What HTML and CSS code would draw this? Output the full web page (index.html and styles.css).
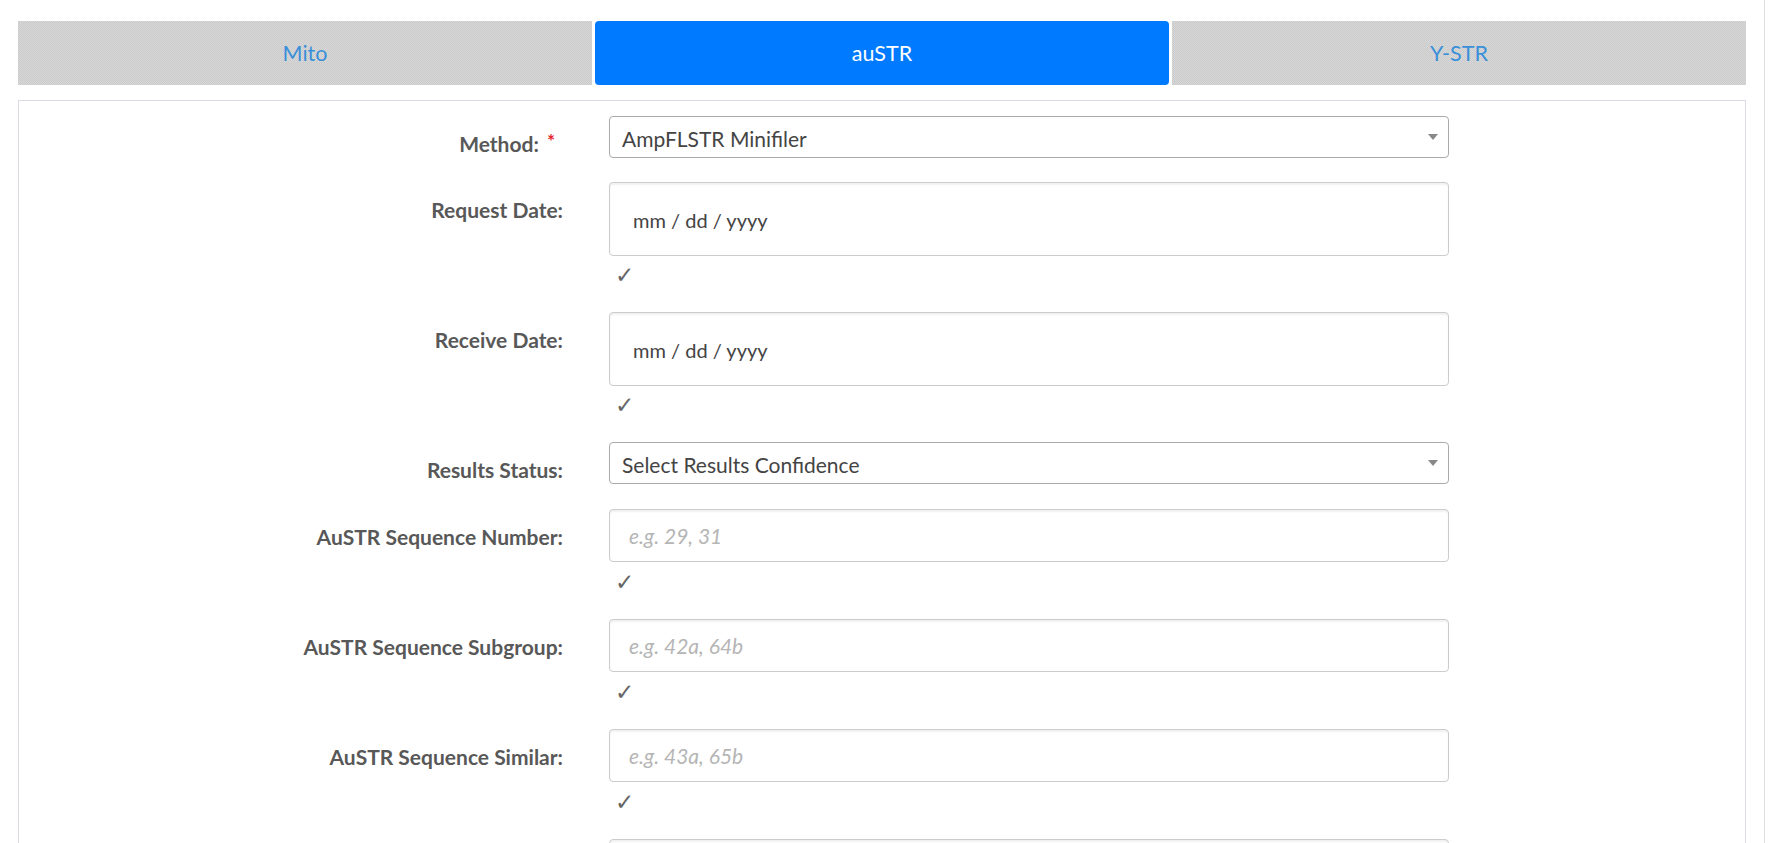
FILE: index.html
```html
<!DOCTYPE html>
<html lang="en">
<head>
<meta charset="utf-8">
<title>auSTR</title>
<link rel="stylesheet" href="styles.css">
</head>
<body>
<div class="page">
  <nav class="tabs">
    <div class="tab">Mito</div>
    <div class="tab active">auSTR</div>
    <div class="tab">Y-STR</div>
  </nav>
  <section class="panel">
    <form class="form">
      <div class="row row-first">
        <label class="label label-req">Method: <span class="req">*</span></label>
        <div class="field">
          <div class="select"><span class="select-text">AmpFLSTR Minifiler</span><b class="arrow"></b></div>
        </div>
      </div>
      <div class="row">
        <label class="label">Request Date:</label>
        <div class="field">
          <input class="date" type="text" value="mm / dd / yyyy" readonly>
          <div class="check check-date">✓</div>
        </div>
      </div>
      <div class="row">
        <label class="label">Receive Date:</label>
        <div class="field">
          <input class="date" type="text" value="mm / dd / yyyy" readonly>
          <div class="check check-date">✓</div>
        </div>
      </div>
      <div class="row">
        <label class="label">Results Status:</label>
        <div class="field">
          <div class="select"><span class="select-text">Select Results Confidence</span><b class="arrow"></b></div>
        </div>
      </div>
      <div class="row">
        <label class="label">AuSTR Sequence Number:</label>
        <div class="field">
          <input class="text" type="text" placeholder="e.g. 29, 31">
          <div class="check">✓</div>
        </div>
      </div>
      <div class="row">
        <label class="label">AuSTR Sequence Subgroup:</label>
        <div class="field">
          <input class="text" type="text" placeholder="e.g. 42a, 64b">
          <div class="check">✓</div>
        </div>
      </div>
      <div class="row">
        <label class="label">AuSTR Sequence Similar:</label>
        <div class="field">
          <input class="text" type="text" placeholder="e.g. 43a, 65b">
          <div class="check">✓</div>
        </div>
      </div>
      <div class="row">
        <label class="label"></label>
        <div class="field">
          <input class="text" type="text">
        </div>
      </div>
    </form>
  </section>
</div>
</body>
</html>
```

FILE: styles.css
```css
* { box-sizing: border-box; }
html, body { margin: 0; padding: 0; background: #fff; overflow: hidden; }
body { font-family: Lato, "Open Sans", sans-serif; }

.page {
  width: 1765px;
  min-height: 100vh;
  border-right: 1px solid #dedede;
  padding: 21px 18px 0 18px;
}

.tabs {
  display: grid;
  grid-template-columns: repeat(3, 1fr);
  gap: 3px;
  height: 64px;
}
.tab {
  display: flex;
  align-items: center;
  justify-content: center;
  font-size: 21.5px;
  color: #3a8fd9;
  background: repeating-conic-gradient(#cacaca 0 25%, #d8d8d8 0 50%) 0 0 / 2px 2px;
}
.tab.active {
  background: #007bff;
  color: #fff;
  border-radius: 4px;
}

.panel {
  margin-top: 15px;
  border: 1px solid #d9dce4;
  padding: 15px 0 0 0;
  min-height: 800px;
}

.row {
  display: flex;
  align-items: flex-start;
  margin-bottom: 25px;
}
.row-first { margin-bottom: 24px; }
.label {
  width: 544px;
  flex: none;
  text-align: right;
  font-weight: 700;
  font-size: 21px;
  line-height: 26px;
  color: #585858;
  padding-top: 15px;
}
.label-req { padding-right: 8px; }
.req {
  color: #e4262b;
  font-size: 19px;
  line-height: 19px;
  vertical-align: top;
  margin-left: 3px;
}
.field {
  margin-left: 46px;
  width: 840px;
  flex: none;
}

.select {
  position: relative;
  height: 42px;
  border: 1px solid #aaa;
  border-radius: 4px;
  padding: 2px 30px 0 12px;
  display: flex;
  align-items: center;
  font-size: 21px;
  color: #444;
}
.arrow {
  position: absolute;
  right: 10px;
  top: 50%;
  margin-top: -3px;
  border-style: solid;
  border-width: 6px 5px 0 5px;
  border-color: #888 transparent transparent transparent;
}

.date, .text {
  display: block;
  width: 100%;
  border: 1px solid #ccc;
  border-radius: 4px;
  box-shadow: inset 0 2px 2px rgba(0, 0, 0, 0.06);
  font-family: Lato, "Open Sans", sans-serif;
  font-size: 21px;
  color: #444;
  outline: none;
  margin: 0;
}
.date {
  height: 74px;
  padding: 2px 23px 0 23px;
  font-size: 20px;
}
.text {
  height: 53px;
  padding: 0 19px;
}
.text::placeholder {
  color: #b5b5b5;
  font-style: italic;
}

.check {
  height: 32px;
  line-height: 40px;
  padding-left: 6px;
  font-family: "DejaVu Sans", sans-serif;
  font-size: 23px;
  color: #666;
}
.check-date { height: 31px; line-height: 39px; }
```
